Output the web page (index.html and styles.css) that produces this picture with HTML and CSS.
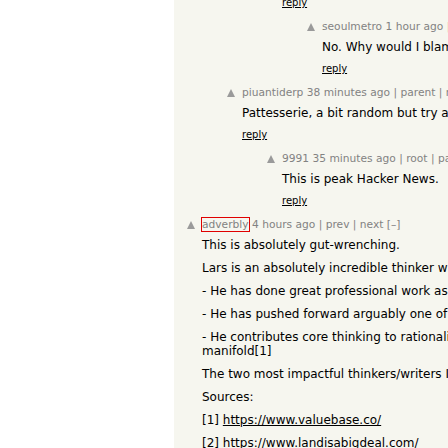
FILE: index.html
```html
<!DOCTYPE html>
<html>
<head>
<meta charset="utf-8">
<link rel="stylesheet" href="styles.css">
</head>
<body>
<div class="page">
  <div class="thread">
    <div class="comment cut lvl2">
      <div class="vote"></div>
      <div class="main">
        <div class="reply first"><a href="#">reply</a></div>
      </div>
    </div>

    <div class="comment lvl3">
      <div class="vote"><span class="arrow"></span></div>
      <div class="main">
        <div class="comhead"><a href="#">seoulmetro</a> <a href="#">1 hour ago</a> | <a href="#">parent</a> | <a href="#">next</a> [–]</div>
        <div class="commtext"><p>No. Why would I blame them? They did nothing wrong.</p></div>
        <div class="reply"><a href="#">reply</a></div>
      </div>
    </div>

    <div class="comment lvl1">
      <div class="vote"><span class="arrow"></span></div>
      <div class="main">
        <div class="comhead"><a href="#">piuantiderp</a> <a href="#">38 minutes ago</a> | <a href="#">parent</a> | <a href="#">next</a> [–]</div>
        <div class="commtext"><p>Pattesserie, a bit random but try a few of the bakeries.</p></div>
        <div class="reply"><a href="#">reply</a></div>
      </div>
    </div>

    <div class="comment lvl2">
      <div class="vote"><span class="arrow"></span></div>
      <div class="main">
        <div class="comhead"><a href="#">9991</a> <a href="#">35 minutes ago</a> | <a href="#">root</a> | <a href="#">parent</a> | <a href="#">next</a> [–]</div>
        <div class="commtext"><p>This is peak Hacker News.</p></div>
        <div class="reply"><a href="#">reply</a></div>
      </div>
    </div>

    <div class="comment lvl0">
      <div class="vote"><span class="arrow"></span></div>
      <div class="main">
        <div class="comhead"><a href="#" class="hl">adverbly</a> <a href="#">4 hours ago</a> | <a href="#">prev</a> | <a href="#">next</a> [–]</div>
        <div class="commtext">
          <p>This is absolutely gut-wrenching.</p>
          <p>Lars is an absolutely incredible thinker with a rare clarity of mind.</p>
          <p>- He has done great professional work as a founder and investor.</p>
          <p>- He has pushed forward arguably one of the most important ideas of our time.</p>
          <p>- He contributes core thinking to rationality, forecasting and prediction markets like<br>manifold[1]</p>
          <p>The two most impactful thinkers/writers I have followed online.</p>
          <p>Sources:</p>
          <p>[1] <a href="#" class="ul">https://www.valuebase.co/</a></p>
          <p>[2] <a href="#" class="ul">https://www.landisabigdeal.com/</a></p>
        </div>
      </div>
    </div>
  </div>
</div>
</body>
</html>
```

FILE: styles.css
```css
html, body {
  margin: 0;
  padding: 0;
  background: #ffffff;
  overflow: hidden;
  height: 448px;
}

.page {
  margin-left: 174px;
  background: #f6f6ef;
  min-height: 448px;
  width: 900px;
  font-family: "DejaVu Sans", Verdana, sans-serif;
  color: #000000;
}

.thread {
  display: flex;
  flex-direction: column;
}

.comment {
  display: flex;
  margin-top: 12px;
}

.comment.cut {
  margin-top: 0;
}

.lvl0 { padding-left: 13px; }
.lvl1 { padding-left: 53px; }
.lvl2 { padding-left: 93px; }
.lvl3 { padding-left: 133px; }

.vote {
  width: 15px;
  flex: none;
}

.arrow {
  display: block;
  width: 0;
  height: 0;
  margin-top: 2px;
  border-left: 4px solid transparent;
  border-right: 4px solid transparent;
  border-bottom: 8px solid #9a9a9a;
}

.main {
  display: flex;
  flex-direction: column;
  white-space: nowrap;
}

.comhead {
  font-size: 10.67px;
  line-height: 12px;
  height: 12px;
  color: #828282;
}

.comhead a {
  color: #828282;
  text-decoration: none;
}

.comhead a.hl {
  outline: 1px solid #e00000;
  outline-offset: 0;
}

.commtext {
  margin-top: 7px;
  font-size: 12px;
  line-height: 14px;
}

.commtext p {
  margin: 9px 0 0 0;
}

.commtext p:first-child {
  margin-top: 0;
}

.commtext a.ul {
  color: #000000;
  text-decoration: underline;
}

.reply {
  margin-top: 9px;
  font-size: 10px;
  line-height: 12px;
  height: 12px;
}

.reply.first {
  margin-top: -3px;
}

.reply a {
  color: #000000;
  text-decoration: underline;
}
```
